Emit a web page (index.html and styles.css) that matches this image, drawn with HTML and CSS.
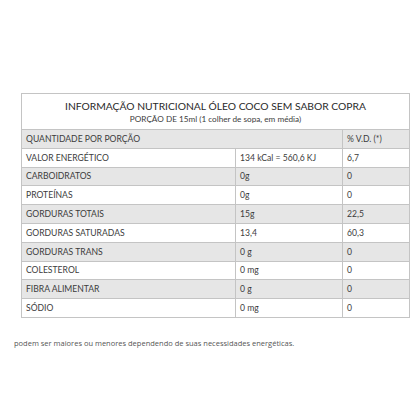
FILE: index.html
```html
<!DOCTYPE html>
<html>
<head>
<meta charset="utf-8">
<link rel="stylesheet" href="styles.css">
</head>
<body>
<div class="page">
  <table class="nutri">
    <colgroup><col class="c1"><col class="c2"><col class="c3"></colgroup>
    <thead>
      <tr><th colspan="3" class="head">
        <div class="title">INFORMAÇÃO NUTRICIONAL ÓLEO COCO SEM SABOR COPRA</div>
        <div class="sub">PORÇÃO DE 15ml (1 colher de sopa, em média)</div>
      </th></tr>
    </thead>
    <tbody>
      <tr class="g"><td colspan="2">QUANTIDADE POR PORÇÃO</td><td>% V.D. (*)</td></tr>
      <tr><td>VALOR ENERGÉTICO</td><td>134 kCal = 560,6 KJ</td><td>6,7</td></tr>
      <tr class="g"><td>CARBOIDRATOS</td><td>0g</td><td>0</td></tr>
      <tr><td>PROTEÍNAS</td><td>0g</td><td>0</td></tr>
      <tr class="g"><td>GORDURAS TOTAIS</td><td>15g</td><td>22,5</td></tr>
      <tr><td>GORDURAS SATURADAS</td><td>13,4</td><td>60,3</td></tr>
      <tr class="g"><td>GORDURAS TRANS</td><td>0 g</td><td>0</td></tr>
      <tr><td>COLESTEROL</td><td>0 mg</td><td>0</td></tr>
      <tr class="g"><td>FIBRA ALIMENTAR</td><td>0 g</td><td>0</td></tr>
      <tr><td>SÓDIO</td><td>0 mg</td><td>0</td></tr>
    </tbody>
  </table>
  <p class="foot">podem ser maiores ou menores dependendo de suas necessidades energéticas.</p>
</div>
</body>
</html>
```
FILE: styles.css
```css
html, body { margin: 0; padding: 0; background: #fff; }
.page { padding: 93px 11px 0 21px; font-family: Lato, "Open Sans", sans-serif; color: #3c3c3c; }
.nutri { width: 388px; border-collapse: collapse; table-layout: fixed; border: 1px solid #c4c4c4; }
.c1 { width: 214px; }
.c2 { width: 107px; }
.c3 { width: 67px; }
.head { height: 35px; padding: 0; text-align: center; font-weight: normal; }
.title { font-size: 10.3px; color: #2a2a2a; line-height: 14px; margin-top: 0; }
.sub { font-size: 8.2px; color: #3c3c3c; line-height: 12px; }
.nutri td { height: 17.8px; padding: 0 0 0 4px; font-size: 8.6px; line-height: 10px; border: 1px solid #c4c4c4; white-space: nowrap; }
.nutri tr.g td { background: #e6e6e6; }
.foot { margin: 20px 0 0 -7px; font-size: 7.5px; color: #555; font-family: "Open Sans", sans-serif; }
```
